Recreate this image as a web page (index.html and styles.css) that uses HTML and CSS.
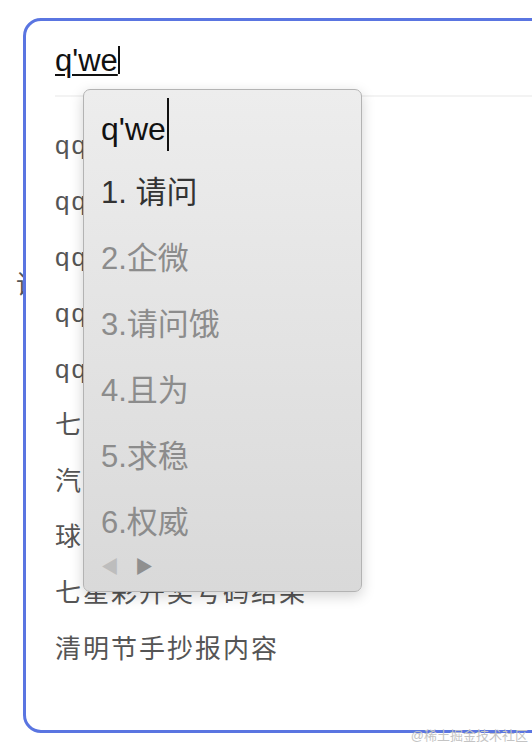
FILE: index.html
```html
<!DOCTYPE html>
<html lang="zh-CN">
<head>
    <meta charset="UTF-8">
    <meta name="viewport" content="width=device-width, initial-scale=1.0">
    <title>Search</title>
    <link rel="stylesheet" href="styles.css">
</head>
<body>
    <span class="peek">请</span>
    <div class="search-box">
        <div class="input-row">
            <span class="typed">q'we</span><span class="caret"></span>
        </div>
        <ul class="suggestions">
            <li>qq邮箱</li>
            <li>qq音乐</li>
            <li>qq空间</li>
            <li>qq飞车</li>
            <li>qq浏览器</li>
            <li>七星彩</li>
            <li>汽车之家</li>
            <li>球球大作战</li>
            <li>七星彩开奖号码结果</li>
            <li>清明节手抄报内容</li>
        </ul>
    </div>

    <div class="ime">
        <div class="ime-input">q'we<span class="ime-caret"></span></div>
        <ul class="candidates">
            <li class="first">1. 请问</li>
            <li>2.企微</li>
            <li>3.请问饿</li>
            <li>4.且为</li>
            <li>5.求稳</li>
            <li>6.权威</li>
        </ul>
        <div class="pager">
            <span class="prev">&#9664;</span>
            <span class="next">&#9654;</span>
        </div>
    </div>

    <div class="watermark">@稀土掘金技术社区</div>
</body>
</html>
```

FILE: styles.css
```css
body {
    margin: 0;
    width: 532px;
    height: 746px;
    overflow: hidden;
    position: relative;
    background-color: #ffffff;
    font-family: "Liberation Sans", "Noto Sans CJK SC", sans-serif;
}
.peek {
    position: absolute;
    left: 16px;
    top: 264px;
    font-size: 26px;
    color: #555;
}
.search-box {
    position: relative;
    margin: 18px 0 0 23px;
    width: 560px;
    height: 709px;
    border: 3px solid #5a75e1;
    border-radius: 18px;
    background-color: #ffffff;
}
.input-row {
    display: flex;
    align-items: center;
    height: 74px;
    margin-left: 29px;
    border-bottom: 2px solid #f3f3f3;
}
.typed {
    font-size: 31px;
    color: #111;
    text-decoration: underline;
    text-decoration-thickness: 2px;
    text-underline-offset: 3px;
    margin-top: 6px;
}
.caret {
    width: 2px;
    height: 28px;
    margin-top: 4px;
    background-color: #111;
}
.suggestions {
    list-style: none;
    margin: 20px 0 0 29px;
    padding: 0;
}
.suggestions li {
    height: 56px;
    line-height: 56px;
    font-size: 26px;
    letter-spacing: 2px;
    color: #555;
}
.ime {
    position: absolute;
    left: 83px;
    top: 89px;
    width: 279px;
    height: 503px;
    border: 1px solid #b3b3b3;
    border-radius: 7px;
    background: linear-gradient(#ededed, #d9d9d9);
    box-shadow: 0 4px 14px rgba(0, 0, 0, 0.18);
    padding-left: 17px;
    box-sizing: border-box;
}
.ime-input {
    display: flex;
    align-items: center;
    height: 62px;
    margin-top: 8px;
    font-size: 32px;
    color: #111;
}
.ime-caret {
    align-self: flex-start;
    width: 2px;
    height: 53px;
    margin: 0 0 0 1px;
    background-color: #111;
}
.candidates {
    list-style: none;
    margin: 0;
    padding: 0;
}
.candidates li {
    height: 66px;
    line-height: 66px;
    font-size: 31px;
    color: #8c8c8c;
}
.candidates .first {
    color: #333;
}
.pager {
    display: flex;
    gap: 16px;
    margin-top: -4px;
    font-size: 18px;
}
.prev {
    color: #bdbdbd;
}
.next {
    color: #8f8f8f;
}
.watermark {
    position: absolute;
    right: 4px;
    bottom: 2px;
    font-size: 13px;
    color: #c4c4c4;
}
```
